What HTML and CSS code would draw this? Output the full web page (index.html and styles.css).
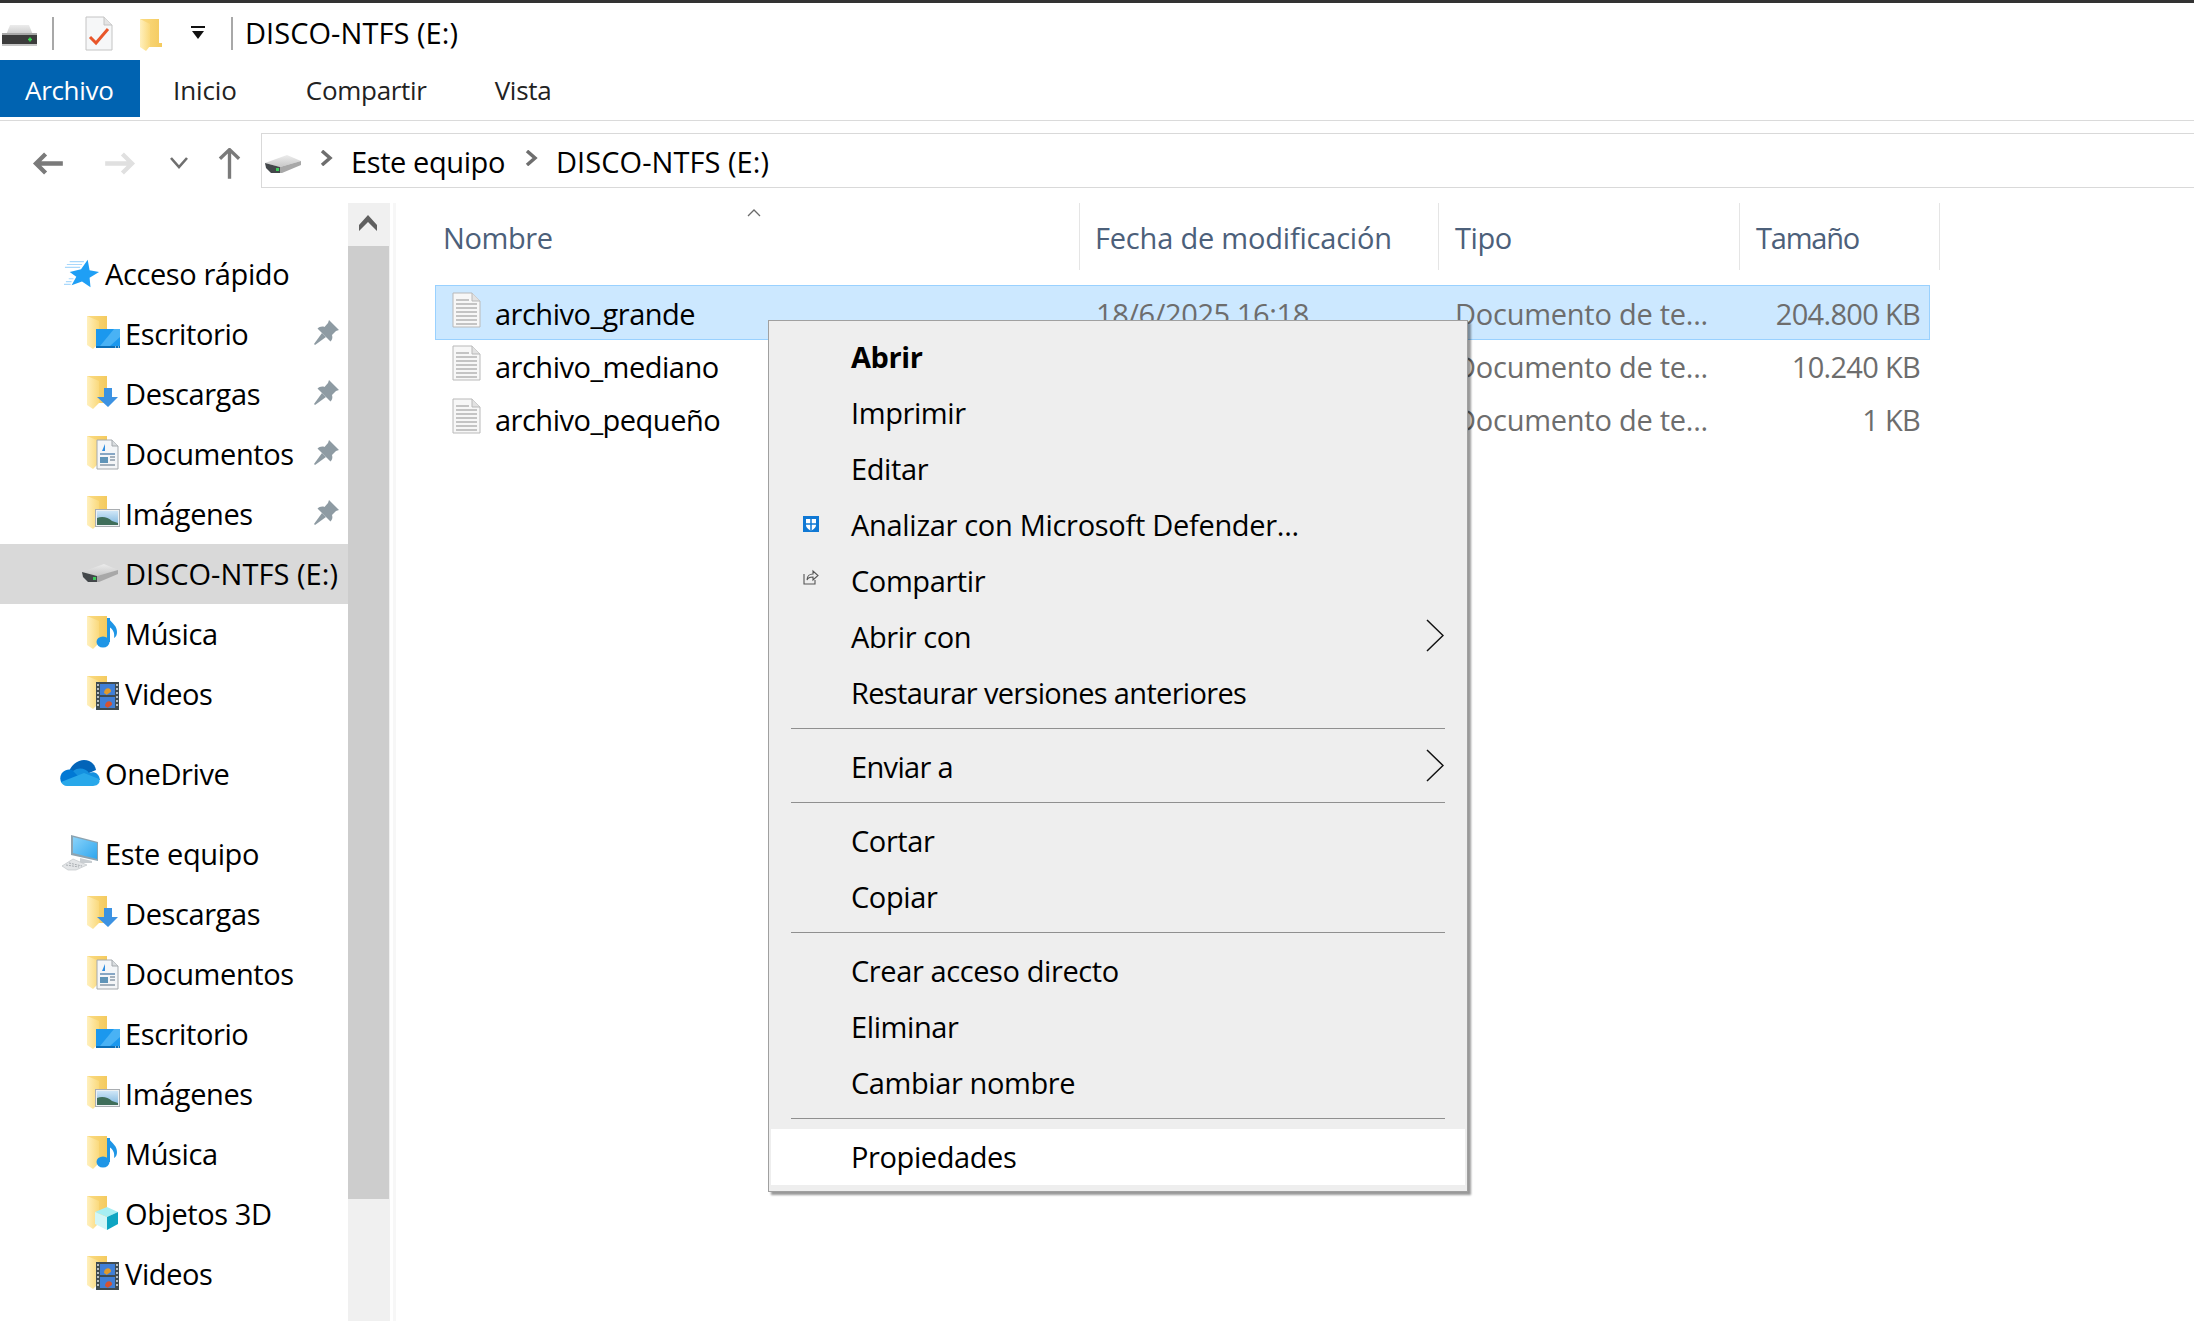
FILE: index.html
```html
<!DOCTYPE html>
<html lang="es">
<head>
  <meta charset="UTF-8">
  <title>DISCO-NTFS (E:)</title>
  <link rel="stylesheet" href="styles.css">
</head>
<body>
  <svg class="sprite" width="0" height="0" aria-hidden="true">
    <defs>
      <linearGradient id="folderBack" x1="0" y1="0" x2="1" y2="0">
        <stop offset="0" stop-color="#fbdc84"/>
        <stop offset="1" stop-color="#f4ca5e"/>
      </linearGradient>
      <linearGradient id="folderFlap" x1="0" y1="0" x2="1" y2="0">
        <stop offset="0" stop-color="#fff0bd"/>
        <stop offset="1" stop-color="#fad97c"/>
      </linearGradient>
      <linearGradient id="driveTop" x1="0" y1="0" x2="0" y2="1">
        <stop offset="0" stop-color="#ececec"/>
        <stop offset="1" stop-color="#c8c8c8"/>
      </linearGradient>
      <linearGradient id="skyFill" x1="0" y1="0" x2="0" y2="1">
        <stop offset="0" stop-color="#cfe6f7"/>
        <stop offset="1" stop-color="#7fb6de"/>
      </linearGradient>
      <linearGradient id="screenFill" x1="0" y1="0" x2="1" y2="1">
        <stop offset="0" stop-color="#8ad3fa"/>
        <stop offset="1" stop-color="#2ea6ee"/>
      </linearGradient>

      <symbol id="folder" viewBox="0 0 40 36">
        <path d="M1 1H21V28H10V30H1Z" fill="url(#folderBack)"/>
        <path d="M1 1L13 6V28L7 34L1 30Z" fill="url(#folderFlap)"/>
      </symbol>
      <symbol id="o-desk" viewBox="0 0 40 36">
        <rect x="10" y="14" width="24" height="19" fill="#1b98ee"/>
        <path d="M14 31L28 14H34V22L24 31Z" fill="#49b2f5"/>
        <rect x="10" y="31" width="24" height="2" fill="#0b6fb8"/>
        <path d="M29 32H30M32 32H33" stroke="#fff" stroke-width="1"/>
      </symbol>
      <symbol id="o-down" viewBox="0 0 40 36">
        <path d="M18 13H26V22H32L22 32L11 22H18Z" fill="#3c92e2"/>
      </symbol>
      <symbol id="o-docs" viewBox="0 0 40 36">
        <path d="M11 5H26L32 11V34H11Z" fill="#f4f6f8" stroke="#a4a9ad"/>
        <path d="M26 5V11H32" fill="#d9dde0" stroke="#a4a9ad"/>
        <path d="M16 16L19 9V16Z" fill="#2e8de0"/>
        <rect x="14" y="18" width="15" height="2" fill="#86a6c4"/>
        <rect x="14" y="22" width="8" height="6" fill="#5f94b8"/>
        <path d="M24 22H29M24 25H29M14 30H29" stroke="#8b9aa8" stroke-width="1.5"/>
      </symbol>
      <symbol id="o-pics" viewBox="0 0 40 36">
        <rect x="9.5" y="14.5" width="24" height="17" fill="#eef1f3" stroke="#a9adb1"/>
        <rect x="11" y="16" width="21" height="14" fill="url(#skyFill)"/>
        <path d="M11 30V23C16 21 22 22 26 26L32 28V30Z" fill="#3f6e5a"/>
      </symbol>
      <symbol id="o-music" viewBox="0 0 40 36">
        <path d="M22.500 3V27" stroke="#1e95e6" stroke-width="3"/>
        <ellipse cx="17" cy="27" rx="6.500" ry="5.500" fill="#1e95e6"/>
        <path d="M23 4C27 9 31 11 31 17C31 20 30 22 28 23C29 18 27 14 23 12Z" fill="#1e95e6"/>
      </symbol>
      <symbol id="o-video" viewBox="0 0 40 36">
        <rect x="10" y="7" width="23" height="28" fill="#3f4b50"/>
        <rect x="14" y="9" width="15" height="11" fill="#3f7fd6"/>
        <rect x="14" y="22" width="15" height="11" fill="#3f7fd6"/>
        <path d="M18 18C18 12 25 12 25 16C25 18 22 18 21 20Z" fill="#e09a2a"/>
        <path d="M19 31C19 25 26 25 26 29C26 31 23 31 22 33Z" fill="#d8522e"/>
        <path d="M12 9V33" stroke="#b9c0c4" stroke-width="2" stroke-dasharray="2 2"/>
        <path d="M31 9V33" stroke="#b9c0c4" stroke-width="2" stroke-dasharray="2 2"/>
      </symbol>
      <symbol id="o-cube" viewBox="0 0 40 36">
        <path d="M9 17L21 12L32 17L21 22Z" fill="#a6eef2"/>
        <path d="M9 17L21 22V35L9 29Z" fill="#d2f6f7"/>
        <path d="M32 17L21 22V35L32 29Z" fill="#0ea5c2"/>
      </symbol>

      <symbol id="star" viewBox="0 0 38 30">
        <path d="M6 2H21M3 5H19M1 8H17M5 20H10M2 23H8M0 26H7" stroke="#a9d8fb" stroke-width="1.200"/>
        <path d="M25 0L27 11L37 13L27 19L28 29L19 23L8 27L13 18L6 13L18 10Z" fill="#1f9ff5"/>
      </symbol>
      <symbol id="cloud" viewBox="0 0 40 26">
        <path d="M9 12C11 4 19 0 24 0C30 0 35 4 36 10L20 17Z" fill="#0364b8"/>
        <path d="M1 22C-2 14 5 8 12 10L24 17L6 25Z" fill="#0078d4"/>
        <path d="M13 11C18 7 26 8 29 13C34 11 39 13 40 20L22 20Z" fill="#1490df"/>
        <path d="M1 22L24 13L39 19C41 23 37 26 33 26H7C4 26 2 24 1 22Z" fill="#28a8ea"/>
      </symbol>
      <symbol id="pc" viewBox="0 0 38 36">
        <path d="M9 0L36 7V26L9 20Z" fill="#8da3b0"/>
        <path d="M11 2L35 8V24L11 18Z" fill="url(#screenFill)"/>
        <path d="M18 23V28H30V26Z" fill="#c9ced2"/>
        <path d="M0 31L11 24L25 30L14 35H6Z" fill="#e3e5e7" stroke="#c2c6c9" stroke-width="0.700"/>
        <path d="M4 30L17 32M7 28L20 31" stroke="#a9aeb2" stroke-width="1" stroke-dasharray="2 1"/>
      </symbol>
      <symbol id="drive" viewBox="0 0 38 20">
        <path d="M0 8L22 0L36 6L15 12Z" fill="url(#driveTop)"/>
        <path d="M15 12L36 6V10L17 18H15Z" fill="#a8a8a8"/>
        <path d="M0 8L15 12V18H6L1 13Z" fill="#43474a"/>
        <rect x="11" y="13" width="3" height="3" fill="#3ecb5a"/>
      </symbol>
      <symbol id="drive-flat" viewBox="0 0 35 21">
        <path d="M4 10L8 0H27L31 10Z" fill="url(#driveTop)"/>
        <rect x="0" y="10" width="35" height="9" fill="#3c3c3c"/>
        <rect x="0" y="8" width="35" height="2" fill="#a8a8a8"/>
        <rect x="0" y="19" width="35" height="2" fill="#c6c6c6"/>
        <path d="M26 14.500H30M28 12.500V16.500" stroke="#35e04f" stroke-width="1.500"/>
      </symbol>
      <symbol id="page" viewBox="0 0 30 36">
        <path d="M2 1H21L29 9V35H2Z" fill="#f7f7f7" stroke="#b9b9b9"/>
        <path d="M21 1V9H29" fill="#e2e2e2" stroke="#b9b9b9"/>
        <path d="M5 8H18M5 12H26M5 16H26M5 20H26M5 24H26M5 28H26M5 32H26" stroke="#c4c4c4" stroke-width="2"/>
      </symbol>
      <symbol id="pin" viewBox="0 0 28 28">
        <path d="M16 2L26 12L23 13L19 17C20 20 19 22 17.500 23.500L4.500 10.500C6 9 9 8 11.500 9L15 5Z" fill="#8e9ba3"/>
        <path d="M9 15L13 19L2 27L1 26Z" fill="#8e9ba3"/>
      </symbol>
    </defs>
  </svg>

  <header class="titlebar">
    <svg class="ico-drive-flat"><use href="#drive-flat"/></svg>
    <span class="tsep"></span>
    <svg class="ico-check" viewBox="0 0 28 35">
      <path d="M1 1H19L27 9V34H1Z" fill="#f6f7f8" stroke="#c4c4c4"/>
      <path d="M19 1V9H27" fill="#e4e4e4" stroke="#c4c4c4"/>
      <path d="M5 21L11 27L23 13" fill="none" stroke="#e8562a" stroke-width="3"/>
    </svg>
    <svg class="ico-qfolder" viewBox="0 0 24 34">
      <path d="M1 1H20V25H23V29H9V27H1Z" fill="url(#folderBack)"/>
      <path d="M1 1L11 6V28L7 33L1 29Z" fill="url(#folderFlap)"/>
    </svg>
    <svg class="ico-drop" viewBox="0 0 14 14">
      <rect x="0" y="0" width="14" height="2" fill="#111"/>
      <path d="M1 5H13L7 13Z" fill="#111"/>
    </svg>
    <span class="tsep"></span>
    <span class="title caps">DISCO-NTFS (E:)</span>
  </header>

  <nav class="tabs">
    <a class="tab tab-file">Archivo</a>
    <a class="tab tab-inicio">Inicio</a>
    <a class="tab tab-share">Compartir</a>
    <a class="tab tab-view">Vista</a>
  </nav>

  <div class="addressrow">
    <svg class="nav-btn back" viewBox="0 0 32 24"><path d="M14 2L4 12L14 22M4 12H32" fill="none" stroke="#7a7a7a" stroke-width="4.500"/></svg>
    <svg class="nav-btn fwd" viewBox="0 0 32 24"><path d="M18 2L28 12L18 22M28 12H0" fill="none" stroke="#e0e0e0" stroke-width="4.500"/></svg>
    <svg class="nav-btn recent" viewBox="0 0 18 12"><path d="M1 1L9 10L17 1" fill="none" stroke="#6f6f6f" stroke-width="2.600"/></svg>
    <svg class="nav-btn up" viewBox="0 0 24 32"><path d="M2 11L12 1.500L22 11M12 2V32" fill="none" stroke="#7a7a7a" stroke-width="3.500"/></svg>
    <div class="addressbox">
      <svg class="ico-addr"><use href="#drive"/></svg>
      <svg class="crumb-sep first" viewBox="0 0 13 16"><path d="M2 1L10 8L2 15" fill="none" stroke="#6e6e6e" stroke-width="3.500"/></svg>
      <span class="crumb">Este equipo</span>
      <svg class="crumb-sep" viewBox="0 0 13 16"><path d="M2 1L10 8L2 15" fill="none" stroke="#6e6e6e" stroke-width="3.500"/></svg>
      <span class="crumb caps">DISCO-NTFS (E:)</span>
    </div>
  </div>

  <div class="content">
    <aside class="sidebar">
      <ul class="tree">
        <li class="node top"><svg class="ni-star"><use href="#star"/></svg><span class="label">Acceso rápido</span></li>
        <li class="node sub"><span class="ni"><svg><use href="#folder"/></svg><svg><use href="#o-desk"/></svg></span><span class="label">Escritorio</span><svg class="pin"><use href="#pin"/></svg></li>
        <li class="node sub"><span class="ni"><svg><use href="#folder"/></svg><svg><use href="#o-down"/></svg></span><span class="label">Descargas</span><svg class="pin"><use href="#pin"/></svg></li>
        <li class="node sub"><span class="ni"><svg><use href="#folder"/></svg><svg><use href="#o-docs"/></svg></span><span class="label">Documentos</span><svg class="pin"><use href="#pin"/></svg></li>
        <li class="node sub"><span class="ni"><svg><use href="#folder"/></svg><svg><use href="#o-pics"/></svg></span><span class="label">Imágenes</span><svg class="pin"><use href="#pin"/></svg></li>
        <li class="node sub active"><span class="ni"><svg class="ni-drive"><use href="#drive"/></svg></span><span class="label caps">DISCO-NTFS (E:)</span></li>
        <li class="node sub"><span class="ni"><svg><use href="#folder"/></svg><svg><use href="#o-music"/></svg></span><span class="label">Música</span></li>
        <li class="node sub"><span class="ni"><svg><use href="#folder"/></svg><svg><use href="#o-video"/></svg></span><span class="label">Videos</span></li>
      </ul>
      <ul class="tree spaced">
        <li class="node top"><svg class="ni-cloud"><use href="#cloud"/></svg><span class="label">OneDrive</span></li>
      </ul>
      <ul class="tree spaced">
        <li class="node top"><svg class="ni-pc"><use href="#pc"/></svg><span class="label">Este equipo</span></li>
        <li class="node sub"><span class="ni"><svg><use href="#folder"/></svg><svg><use href="#o-down"/></svg></span><span class="label">Descargas</span></li>
        <li class="node sub"><span class="ni"><svg><use href="#folder"/></svg><svg><use href="#o-docs"/></svg></span><span class="label">Documentos</span></li>
        <li class="node sub"><span class="ni"><svg><use href="#folder"/></svg><svg><use href="#o-desk"/></svg></span><span class="label">Escritorio</span></li>
        <li class="node sub"><span class="ni"><svg><use href="#folder"/></svg><svg><use href="#o-pics"/></svg></span><span class="label">Imágenes</span></li>
        <li class="node sub"><span class="ni"><svg><use href="#folder"/></svg><svg><use href="#o-music"/></svg></span><span class="label">Música</span></li>
        <li class="node sub"><span class="ni"><svg><use href="#folder"/></svg><svg><use href="#o-cube"/></svg></span><span class="label">Objetos 3D</span></li>
        <li class="node sub"><span class="ni"><svg><use href="#folder"/></svg><svg><use href="#o-video"/></svg></span><span class="label">Videos</span></li>
      </ul>
    </aside>

    <div class="scrollbar">
      <div class="sb-btn"><svg viewBox="0 0 18 16"><path d="M9 0L18 10V16L9 7L0 16V10Z" fill="#606060"/></svg></div>
      <div class="sb-thumb"></div>
    </div>

    <main class="files">
      <div class="head">
        <div class="hcol col-name">Nombre<svg class="sort" viewBox="0 0 14 8"><path d="M1 7L7 1L13 7" fill="none" stroke="#6a6a6a" stroke-width="1.300"/></svg></div>
        <div class="hcol col-date">Fecha de modificación</div>
        <div class="hcol">Tipo</div>
        <div class="hcol col-size">Tamaño</div>
      </div>
      <div class="row selected">
        <div class="cell name"><svg class="ico-page"><use href="#page"/></svg>archivo_grande</div>
        <div class="cell meta">18/6/2025 16:18</div>
        <div class="cell meta kind">Documento de te...</div>
        <div class="cell meta size">204.800 KB</div>
      </div>
      <div class="row">
        <div class="cell name"><svg class="ico-page"><use href="#page"/></svg>archivo_mediano</div>
        <div class="cell meta">18/6/2025 16:18</div>
        <div class="cell meta kind">Documento de te...</div>
        <div class="cell meta size">10.240 KB</div>
      </div>
      <div class="row">
        <div class="cell name"><svg class="ico-page"><use href="#page"/></svg>archivo_pequeño</div>
        <div class="cell meta">18/6/2025 16:18</div>
        <div class="cell meta kind">Documento de te...</div>
        <div class="cell meta size">1 KB</div>
      </div>
    </main>
  </div>

  <div class="menu">
    <div class="mi bold"><span class="mi-ico"></span>Abrir</div>
    <div class="mi"><span class="mi-ico"></span>Imprimir</div>
    <div class="mi"><span class="mi-ico"></span>Editar</div>
    <div class="mi loose"><span class="mi-ico"><svg class="ico-shield" viewBox="0 0 16 16"><rect width="16" height="16" fill="#0f78d4"/><path d="M3 3H13V9C13 12 10 13.500 8 15C6 13.500 3 12 3 9Z" fill="#fff"/><path d="M8 2V15M2 8H14" stroke="#0f78d4" stroke-width="1.500"/></svg></span>Analizar con Microsoft Defender...</div>
    <div class="mi"><span class="mi-ico"><svg class="ico-share" viewBox="0 0 16 16"><path d="M1 5V15H12V11" fill="none" stroke="#555" stroke-width="1.100"/><path d="M4 11C4 7 7 5 10 5V2L15 6.500L10 11V8C8 8 5 8 4 11Z" fill="none" stroke="#555" stroke-width="1.100"/></svg></span>Compartir</div>
    <div class="mi"><span class="mi-ico"></span>Abrir con<svg class="more" viewBox="0 0 18 33"><path d="M1 1L17 16.500L1 32" fill="none" stroke="#111" stroke-width="1.500"/></svg></div>
    <div class="mi tight"><span class="mi-ico"></span>Restaurar versiones anteriores</div>
    <div class="msep"></div>
    <div class="mi tight"><span class="mi-ico"></span>Enviar a<svg class="more" viewBox="0 0 18 33"><path d="M1 1L17 16.500L1 32" fill="none" stroke="#111" stroke-width="1.500"/></svg></div>
    <div class="msep"></div>
    <div class="mi"><span class="mi-ico"></span>Cortar</div>
    <div class="mi"><span class="mi-ico"></span>Copiar</div>
    <div class="msep"></div>
    <div class="mi"><span class="mi-ico"></span>Crear acceso directo</div>
    <div class="mi"><span class="mi-ico"></span>Eliminar</div>
    <div class="mi"><span class="mi-ico"></span>Cambiar nombre</div>
    <div class="msep"></div>
    <div class="mi hover"><span class="mi-ico"></span>Propiedades</div>
  </div>
</body>
</html>
```

FILE: styles.css
```css
* { box-sizing: border-box; }
html, body { margin: 0; padding: 0; height: 100%; }
body { font-family: "Open Sans", "Noto Sans", sans-serif; font-size: 29px; letter-spacing: -0.4px; color: #000; background: #fff; overflow: hidden; position: relative; display: flex; flex-direction: column; }
svg { display: block; flex: none; }
ul { list-style: none; margin: 0; padding: 0; }
.sprite { position: absolute; }
.caps { letter-spacing: 0.05px; }

/* barra de titulo */
.titlebar { height: 60px; border-top: 3px solid #333; display: flex; align-items: center; padding-left: 2px; flex: none; }
.ico-drive-flat { width: 35px; height: 21px; margin-top: 7px; }
.tsep { width: 2px; height: 33px; background: #a8a8a8; margin-left: 15px; margin-top: 4px; }
.ico-check { width: 28px; height: 35px; margin-left: 31px; margin-top: 4px; }
.ico-qfolder { width: 24px; height: 34px; margin-left: 26px; margin-top: 6px; }
.ico-drop { width: 14px; height: 14px; margin-left: 28px; margin-top: 2px; }
.ico-drop + .tsep { margin-left: 26px; }
.title { margin-left: 12px; margin-top: 2px; line-height: 1; }

/* pestañas */
.tabs { height: 61px; border-bottom: 1px solid #dadada; display: flex; flex: none; font-size: 26px; letter-spacing: -0.3px; color: #222; padding-bottom: 3px; }
.tab { display: flex; align-items: center; height: 57px; padding-top: 2px; }
.tab-file { width: 140px; padding-left: 25px; background: #0063b1; color: #fff; }
.tab-inicio { margin-left: 33px; letter-spacing: -0.1px; }
.tab-share { margin-left: 69px; }
.tab-view { margin-left: 68px; }

/* barra de direccion */
.addressrow { height: 82px; display: flex; align-items: center; padding: 12px 0 15px 32px; flex: none; }
.nav-btn { margin-top: 5px; }
.nav-btn.back, .nav-btn.fwd { width: 31px; height: 23px; }
.nav-btn.fwd { margin-left: 42px; }
.nav-btn.recent { width: 18px; height: 12px; margin-left: 34px; }
.nav-btn.up { width: 23px; height: 31px; margin-left: 30px; }
.addressbox { flex: 1; height: 55px; margin-left: 20px; margin-right: -2px; border: 1px solid #d9d9d9; display: flex; align-items: center; padding-left: 3px; }
.ico-addr { width: 38px; height: 20px; margin-top: 8px; }
.crumb-sep { width: 13px; height: 16px; margin: -5px 0 0 20px; }
.crumb-sep.first { margin-left: 17px; }
.crumb { margin-left: 18px; margin-top: 2px; }

/* contenido */
.content { flex: 1; display: flex; min-height: 0; }
.sidebar { width: 348px; flex: none; padding-top: 41px; }
.tree.spaced { margin-top: 20px; }
.node { height: 60px; display: flex; align-items: center; white-space: nowrap; }
.node.top { padding-left: 60px; }
.node.sub { padding-left: 84px; }
.node.active { background: #d9d9d9; }
.node.top svg { margin-right: 5px; }
.label { margin-top: -2px; }
.ni-star { width: 36px; height: 30px; margin-left: 4px; margin-top: -1px; }
.ni-cloud { width: 40px; height: 26px; margin-top: -2px; }
.ni-pc { width: 38px; height: 36px; margin-left: 2px; margin-top: -2px; }
.ni { position: relative; width: 41px; height: 36px; flex: none; }
.ni svg { position: absolute; left: 2px; top: -1px; width: 40px; height: 36px; }
.ni svg.ni-drive { left: -2px; top: 8px; width: 38px; height: 20px; }
.pin { width: 28px; height: 28px; margin-left: auto; margin-right: 7px; margin-top: -4px; }

.scrollbar { width: 42px; flex: none; background: #f0f0f0; display: flex; flex-direction: column; }
.sb-btn { height: 43px; display: flex; align-items: center; justify-content: center; }
.sb-btn svg { width: 18px; height: 16px; margin-right: 2px; margin-top: -3px; }
.sb-thumb { height: 953px; width: 41px; background: #cdcdcd; }

.files { flex: 1; border-left: 3px solid #f7f7f7; margin-left: 3px; padding-left: 39px; min-width: 0; }
.head { display: grid; grid-template-columns: 645px 359px 301px 200px; height: 67px; margin-bottom: 15px; color: #4c607a; }
.hcol { position: relative; border-right: 1px solid #e5e5e5; padding: 15px 0 0 16px; }
.col-name { padding-left: 8px; }
.col-date { padding-left: 15px; letter-spacing: -0.2px; }
.col-size { letter-spacing: -1.2px; }
.sort { position: absolute; left: 312px; top: 6px; width: 14px; height: 8px; }
.row { display: grid; grid-template-columns: 645px 359px 301px 188px; width: 1495px; height: 53px; align-items: center; border: 1px solid transparent; }
.row.selected { height: 55px; background: #cce8ff; border-color: #99d1ff; margin-bottom: -1px; }
.cell { white-space: nowrap; padding-top: 2px; }
.cell.name { display: flex; align-items: center; padding-left: 15px; letter-spacing: -0.5px; }
.ico-page { width: 30px; height: 36px; margin-right: 14px; margin-top: -7px; }
.cell.meta { color: #6d6d6d; padding-left: 15px; }
.cell.kind { letter-spacing: -0.25px; }
.cell.size { text-align: right; padding-right: 9px; letter-spacing: -0.7px; }

/* menu contextual */
.menu { position: absolute; left: 768px; top: 320px; width: 700px; height: 872px; background: #eee; border: 1px solid #a0a0a0; padding: 8px 2px 7px; box-shadow: 3px 3px 2px rgba(0, 0, 0, 0.4); }
.mi { height: 56px; display: flex; align-items: center; padding-left: 32px; padding-right: 21px; padding-bottom: 2px; }
.mi.bold { font-weight: 700; }
.mi.hover { background: #fff; }
.mi.tight { letter-spacing: -0.67px; }
.mi.loose { letter-spacing: -0.3px; }
.mi-ico { width: 48px; flex: none; display: flex; }
.ico-shield { width: 16px; height: 16px; margin-top: -1px; }
.ico-share { width: 16px; height: 16px; margin-top: -6px; }
.more { width: 18px; height: 33px; margin-left: auto; margin-top: -2px; }
.msep { height: 18px; padding-top: 7px; margin: 0 20px; }
.msep::before { content: ""; display: block; height: 1px; background: #8f8f8f; }
```
